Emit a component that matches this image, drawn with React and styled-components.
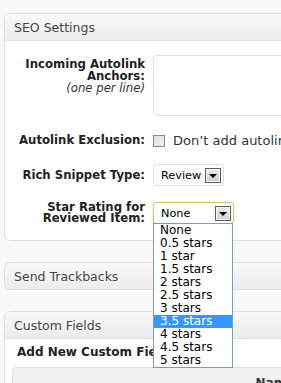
import React from 'react'
import styled, { createGlobalStyle } from 'styled-components'

const GlobalStyle = createGlobalStyle`
  body{
    margin:0;
    background:#f9f9f9;
    overflow:hidden;
    font-family:"DejaVu Sans", Verdana, sans-serif;
    color:#333;
  }
`

const starOptions = ['None', '0.5 stars', '1 star', '1.5 stars', '2 stars', '2.5 stars', '3 stars', '3.5 stars', '4 stars', '4.5 stars', '5 stars']

const App = () => {
  return (
    <>
      <GlobalStyle />
      <Page>
        <Postbox>
          <BoxHeader>SEO Settings</BoxHeader>
          <SeoBody>
            <Label>
              Incoming Autolink Anchors:
              <Hint>(one per line)</Hint>
            </Label>
            <TextArea />

            <Label $center>Autolink Exclusion:</Label>
            <CheckRow>
              <CheckBox />
              <span>Don’t add autolinks to this post</span>
            </CheckRow>

            <Label $center>Rich Snippet Type:</Label>
            <div>
              <Select $width={71}>
                Review
                <ArrowButton />
              </Select>
            </div>

            <Label $center $tight>Star Rating for Reviewed Item:</Label>
            <FieldCell $tight>
              <Select $width={81} $focused>
                None
                <ArrowButton />
              </Select>
              <DropList>
                {starOptions.map((opt) => (
                  <DropItem key={opt} $active={opt === '3.5 stars'}>{opt}</DropItem>
                ))}
              </DropList>
            </FieldCell>
          </SeoBody>
        </Postbox>

        <Postbox $collapsed>
          <BoxHeader $collapsed>Send Trackbacks</BoxHeader>
        </Postbox>

        <Postbox>
          <BoxHeader>Custom Fields</BoxHeader>
          <CustomBody>
            <SubHead>Add New Custom Field:</SubHead>
            <FieldsTable>
              <TableHead>Name</TableHead>
              <TableHead>Value</TableHead>
            </FieldsTable>
          </CustomBody>
        </Postbox>
      </Page>
    </>
  )
}

const Page = styled.div`
  display:flex;
  flex-direction:column;
  gap:21px;
  padding:13px 0 0 4px;
  width:360px;
`

const Postbox = styled.div`
  border:1px solid #dfdfdf;
  border-radius:6px;
  background:${p => (p.$collapsed ? '#f1f1f1' : '#fff')};
`

const BoxHeader = styled.div`
  height:26px;
  display:flex;
  align-items:center;
  padding-left:9px;
  font-size:12.5px;
  color:#464646;
  background:linear-gradient(#f9f9f9, #ececec);
  border-bottom:${p => (p.$collapsed ? 'none' : '1px solid #dfdfdf')};
  border-radius:${p => (p.$collapsed ? '6px' : '6px 6px 0 0')};
`

const SeoBody = styled.div`
  display:grid;
  grid-template-columns:140px 1fr;
  column-gap:8px;
  row-gap:13px;
  padding:14px 0 16px 0;
`

const Label = styled.div`
  display:flex;
  flex-direction:column;
  justify-content:${p => (p.$center ? 'center' : 'flex-start')};
  text-align:right;
  font-size:11.7px;
  font-weight:bold;
  line-height:${p => (p.$tight ? '11px' : '12px')};
  color:#222;
  padding-top:${p => (p.$center ? '0' : '3px')};
  margin-top:${p => (p.$tight ? '3px' : '0')};
`

const Hint = styled.span`
  font-weight:normal;
  font-style:italic;
  color:#333;
`

const TextArea = styled.div`
  height:59px;
  width:220px;
  border:1px solid #dfdfdf;
  border-radius:4px;
  background:#fff;
`

const CheckRow = styled.div`
  display:flex;
  align-items:center;
  gap:8px;
  height:22px;
  font-size:13px;
  color:#333;
  white-space:nowrap;
`

const CheckBox = styled.span`
  flex:none;
  width:10px;
  height:10px;
  margin-top:2px;
  border:1px solid #8a8a8a;
  background:linear-gradient(135deg, #dcdcd8, #f4f4f2);
  box-shadow:inset 0 0 0 1px #e8e8e6;
`

const FieldCell = styled.div`
  position:relative;
  margin-top:${p => (p.$tight ? '3px' : '0')};
`

const Select = styled.div`
  box-sizing:border-box;
  width:${p => p.$width}px;
  height:22px;
  display:flex;
  align-items:center;
  justify-content:space-between;
  padding:0 2px 0 7px;
  font-size:11.3px;
  color:#000;
  background:#fff;
  border:1px solid ${p => (p.$focused ? '#e9bb6c' : '#dfdfdf')};
  border-radius:3px;
  box-shadow:${p => (p.$focused ? '0 0 2px rgba(233,187,108,0.6)' : 'none')};
`

const ArrowButton = styled.span`
  flex:none;
  position:relative;
  box-sizing:border-box;
  width:16px;
  height:15px;
  border:1px solid #5d5d5d;
  background:linear-gradient(#ececec, #cfcfcf);
  box-shadow:inset 0 0 0 1px #f8f8f8;
  &::after{
    content:'';
    position:absolute;
    left:3px;
    top:5px;
    border-left:4px solid transparent;
    border-right:4px solid transparent;
    border-top:4px solid #000;
  }
`

const DropList = styled.div`
  position:absolute;
  top:21px;
  left:0;
  width:80px;
  box-sizing:border-box;
  border:1px solid #7f9db9;
  background:#fff;
  z-index:5;
`

const DropItem = styled.div`
  height:13px;
  line-height:13px;
  padding-left:6px;
  font-size:12px;
  color:${p => (p.$active ? '#fff' : '#000')};
  background:${p => (p.$active ? '#3399ff' : 'transparent')};
  white-space:nowrap;
`

const CustomBody = styled.div`
  padding:5px 0 0 7px;
`

const SubHead = styled.div`
  font-size:12px;
  font-weight:bold;
  line-height:16px;
  color:#222;
  padding-left:5px;
  margin-bottom:7px;
`

const FieldsTable = styled.div`
  display:grid;
  grid-template-columns:524px 1fr;
  border:1px solid #dfdfdf;
  border-radius:4px;
  background:#f1f1f1;
`

const TableHead = styled.div`
  text-align:center;
  font-size:12px;
  font-weight:bold;
  padding:8px 0;
  color:#333;
`

export default App
